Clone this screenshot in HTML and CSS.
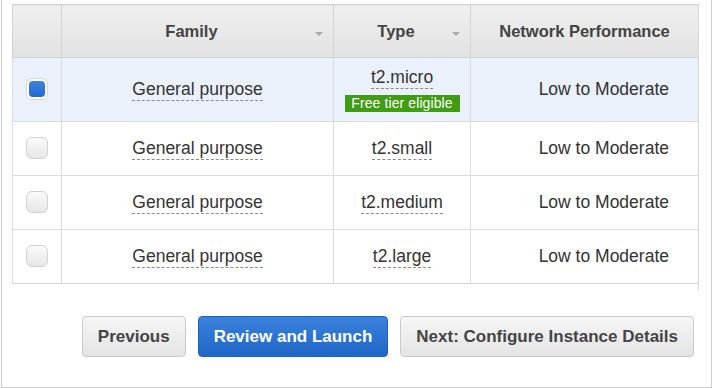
FILE: index.html
```html
<!DOCTYPE html>
<html lang="en">
<head>
    <meta charset="UTF-8">
    <meta name="viewport" content="width=device-width, initial-scale=1.0">
    <title>Choose Instance Type</title>
    <link rel="stylesheet" href="styles.css">
</head>
<body>
    <div class="panel">
        <div class="table-scroll">
            <table class="instance-table">
                <thead>
                    <tr>
                        <th class="col-select"></th>
                        <th class="col-family sortable">Family <span class="sort-arrow"></span></th>
                        <th class="col-type sortable">Type <span class="sort-arrow"></span></th>
                        <th class="col-network">Network Performance</th>
                    </tr>
                </thead>
                <tbody>
                    <tr class="row-selected">
                        <td class="col-select"><span class="checkbox checked"></span></td>
                        <td class="col-family"><span class="hint">General purpose</span></td>
                        <td class="col-type">
                            <span class="hint">t2.micro</span>
                            <span class="free-tier">Free tier eligible</span>
                        </td>
                        <td class="col-network">Low to Moderate</td>
                    </tr>
                    <tr>
                        <td class="col-select"><span class="checkbox"></span></td>
                        <td class="col-family"><span class="hint">General purpose</span></td>
                        <td class="col-type"><span class="hint">t2.small</span></td>
                        <td class="col-network">Low to Moderate</td>
                    </tr>
                    <tr>
                        <td class="col-select"><span class="checkbox"></span></td>
                        <td class="col-family"><span class="hint">General purpose</span></td>
                        <td class="col-type"><span class="hint">t2.medium</span></td>
                        <td class="col-network">Low to Moderate</td>
                    </tr>
                    <tr>
                        <td class="col-select"><span class="checkbox"></span></td>
                        <td class="col-family"><span class="hint">General purpose</span></td>
                        <td class="col-type"><span class="hint">t2.large</span></td>
                        <td class="col-network">Low to Moderate</td>
                    </tr>
                </tbody>
            </table>
        </div>

        <div class="wizard-actions">
            <button type="button" class="btn">Previous</button>
            <button type="button" class="btn btn-primary">Review and Launch</button>
            <button type="button" class="btn">Next: Configure Instance Details</button>
        </div>
    </div>
</body>
</html>
```

FILE: styles.css
```css
body {
    margin: 0;
    font-family: 'Liberation Sans', Arial, sans-serif;
    background-color: #ffffff;
    color: #333;
}

.panel {
    margin-left: 1px;
    width: 711px;
    height: 388px;
    box-sizing: border-box;
    border: 1px solid #cdcdcd;
    border-top: none;
    padding: 4px 0 0 10px;
}

/* scroll area keeps its right edge line below the table */
.table-scroll {
    width: 687px;
    height: 286px;
    box-sizing: border-box;
    border-right: 1px solid #d9d9d9;
}

.instance-table {
    width: 686px;
    border-collapse: collapse;
    table-layout: fixed;
}

.instance-table th,
.instance-table td {
    box-sizing: border-box;
    border: 1px solid #dcdcdc;
    padding: 0;
    text-align: center;
    vertical-align: middle;
}

.instance-table tr > :last-child {
    border-right: none;
}

.instance-table th {
    position: relative;
    height: 53px;
    background: linear-gradient(#efefef, #e2e2e2);
    border-color: #d3d3d3;
    border-top: 1px solid #d0d0d0;
    font-size: 16.5px;
    font-weight: bold;
    color: #444;
}

.instance-table th.sortable {
    padding-right: 12px;
}

.sort-arrow {
    position: absolute;
    right: 10px;
    top: 27px;
    width: 0;
    height: 0;
    border-left: 4px solid transparent;
    border-right: 4px solid transparent;
    border-top: 4px solid #a9a9a9;
}

.instance-table td {
    height: 54px;
    font-size: 17.5px;
    color: #333;
}

.instance-table tr.row-selected td {
    height: 64px;
    background-color: #eaf1fb;
}

.instance-table tbody tr:last-child td {
    border-bottom-color: #d5d5d5;
}

.col-select { width: 49px; }
.col-family { width: 272px; }
.col-type { width: 137px; }

.instance-table td.col-network {
    text-align: right;
    padding-right: 29px;
}

.hint {
    border-bottom: 1px dashed #8a8a8a;
    padding-bottom: 1px;
}

.free-tier {
    display: block;
    width: 115px;
    margin: 7px auto 0;
    height: 17px;
    line-height: 17px;
    background-color: #3f9c13;
    color: #fff;
    font-size: 14px;
    letter-spacing: 0.1px;
}

.checkbox {
    display: inline-block;
    width: 22px;
    height: 22px;
    box-sizing: border-box;
    border: 1px solid #d2d2d2;
    border-radius: 6px;
    background: linear-gradient(#fafafa, #e7e7e7);
    vertical-align: middle;
    position: relative;
    top: -1px;
}

.checkbox.checked {
    background: #fff;
    border-color: #d8d8d8;
    padding: 2px;
}

.checkbox.checked::after {
    content: '';
    display: block;
    width: 16px;
    height: 16px;
    border-radius: 4px;
    background: linear-gradient(#3d84e0, #2468cf);
}

.wizard-actions {
    display: flex;
    justify-content: flex-end;
    gap: 12px;
    margin-top: 26px;
    padding-right: 17px;
}

.btn {
    height: 41px;
    padding: 0 15px;
    font-family: 'Liberation Sans', Arial, sans-serif;
    font-size: 17px;
    font-weight: bold;
    color: #444;
    background: linear-gradient(#f6f6f6, #e4e4e4);
    border: 1px solid #cbcbcb;
    border-radius: 4px;
    cursor: pointer;
}

.btn-primary {
    color: #fff;
    background: linear-gradient(#3a82dc, #1f66c7);
    border-color: #1d61bf;
}
```
